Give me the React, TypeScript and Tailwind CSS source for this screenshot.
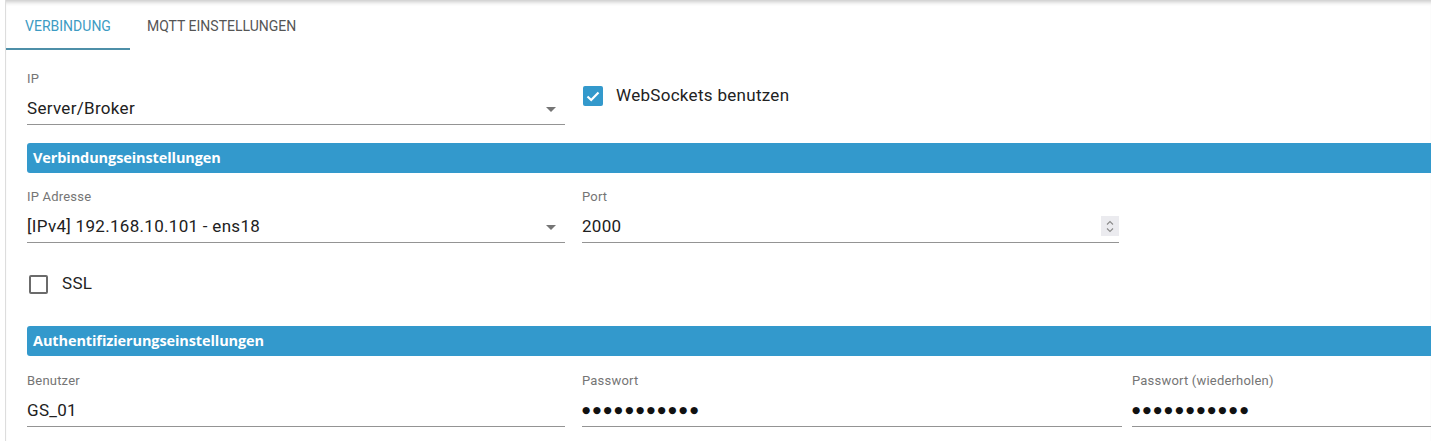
import React from "react";

// ─── Small pieces ───────────────────────────────────────────────────────────

const Caret = () => (
  <svg width="10" height="5" viewBox="0 0 10 5" className="shrink-0">
    <path d="M0 0 L10 0 L5 5 Z" fill="#757575" />
  </svg>
);

const Spinner = () => (
  <div className="w-[18px] h-[20px] bg-[#ebebef] flex flex-col items-center justify-center gap-[3px]">
    <svg width="8" height="5" viewBox="0 0 8 5">
      <path d="M1 4.5 L4 1.5 L7 4.5" fill="none" stroke="#8a8a8a" strokeWidth="1.1" />
    </svg>
    <svg width="8" height="5" viewBox="0 0 8 5">
      <path d="M1 0.5 L4 3.5 L7 0.5" fill="none" stroke="#8a8a8a" strokeWidth="1.1" />
    </svg>
  </div>
);

const Checkbox: React.FC<{ checked?: boolean; label: string }> = ({ checked, label }) => (
  <div className="flex items-center h-[20px]">
    {checked ? (
      <div className="w-[20px] h-[20px] rounded-[2px] bg-[#3399cc] flex items-center justify-center">
        <svg width="14" height="11" viewBox="0 0 14 11">
          <path d="M1.5 5.5 L5.2 9 L12.5 1.6" fill="none" stroke="#fff" strokeWidth="2.2" />
        </svg>
      </div>
    ) : (
      <div className="w-[19px] h-[19px] rounded-[2px] border-2 border-[#6b6b6b]" />
    )}
    <span className={`text-[17px] tracking-[0.3px] text-[#222] ${checked ? "ml-[13px]" : "ml-[14px]"}`}>
      {label}
    </span>
  </div>
);

const SectionHeader: React.FC<{ title: string }> = ({ title }) => (
  <div className="h-[30px] bg-[#3399cc] rounded-l-[3px] flex items-center pl-[6px]">
    <span className="text-white font-bold text-[14.5px] tracking-[-0.1px] [font-family:'Open_Sans',sans-serif]">
      {title}
    </span>
  </div>
);

interface FieldProps {
  label: string;
  value: string;
  width?: string;
  right?: React.ReactNode;
  secret?: boolean;
}

const Field: React.FC<FieldProps> = ({ label, value, width = "w-[538px]", right, secret }) => (
  <div className={`${width} shrink-0`}>
    <div className="h-[14px] leading-[14px] text-[13px] tracking-[0.2px] text-[#757575]">{label}</div>
    <div className="mt-[12px] pb-[6px] border-b border-[#949494] flex items-center justify-between h-[27px]">
      {secret ? (
        <span className="text-[9.5px] tracking-[2.5px] text-[#111] [font-family:'DejaVu_Sans',sans-serif]">
          {value}
        </span>
      ) : (
        <span className="text-[17px] leading-[20px] tracking-[0.3px] text-[#212121]">{value}</span>
      )}
      {right}
    </div>
  </div>
);

// ─── Tabs ───────────────────────────────────────────────────────────────────

const Tabs = () => (
  <div className="flex h-[50px]">
    <div className="w-[124px] flex items-center justify-center pt-[4px] text-[14px] text-[#3d9bc3] border-b-2 border-[#4d8fa8]">
      VERBINDUNG
    </div>
    <div className="px-[17px] flex items-center pt-[2px] text-[14px] text-[#555]">MQTT EINSTELLUNGEN</div>
  </div>
);

// ─── App ────────────────────────────────────────────────────────────────────

export default function App() {
  return (
    <div className="w-[1431px] h-[441px] overflow-hidden bg-white [font-family:Roboto,'Liberation_Sans',sans-serif]">
      <div className="ml-[5px] h-[441px] border-l border-[#dddddd] shadow-[inset_0_5px_4px_-3px_rgba(0,0,0,0.22)]">
        <Tabs />

        <div className="pl-[21px]">
          {/* Row 1 */}
          <div className="flex mt-[22px]">
            <Field
              label="IP"
              value="Server/Broker"
              right={<span className="mr-[9px] mt-[2px]"><Caret /></span>}
            />
            <div className="ml-[18px] mt-[14px]">
              <Checkbox checked label="WebSockets benutzen" />
            </div>
          </div>

          <div className="mt-[18px]">
            <SectionHeader title="Verbindungseinstellungen" />
          </div>

          <div className="flex mt-[17px]">
            <Field
              label="IP Adresse"
              value="[IPv4] 192.168.10.101 - ens18"
              right={<span className="mr-[9px] mt-[2px]"><Caret /></span>}
            />
            <div className="ml-[17px]">
              <Field label="Port" value="2000" width="w-[537px]" right={<Spinner />} />
            </div>
          </div>

          <div className="mt-[31px] ml-[2px]">
            <Checkbox label="SSL" />
          </div>

          <div className="mt-[32px]">
            <SectionHeader title="Authentifizierungseinstellungen" />
          </div>

          <div className="flex mt-[18px]">
            <Field label="Benutzer" value="GS_01" />
            <div className="ml-[17px]">
              <Field label="Passwort" value="●●●●●●●●●●●" width="w-[540px]" secret />
            </div>
            <div className="ml-[10px] flex-1">
              <Field label="Passwort (wiederholen)" value="●●●●●●●●●●●" width="w-[400px]" secret />
            </div>
          </div>
        </div>
      </div>
    </div>
  );
}
